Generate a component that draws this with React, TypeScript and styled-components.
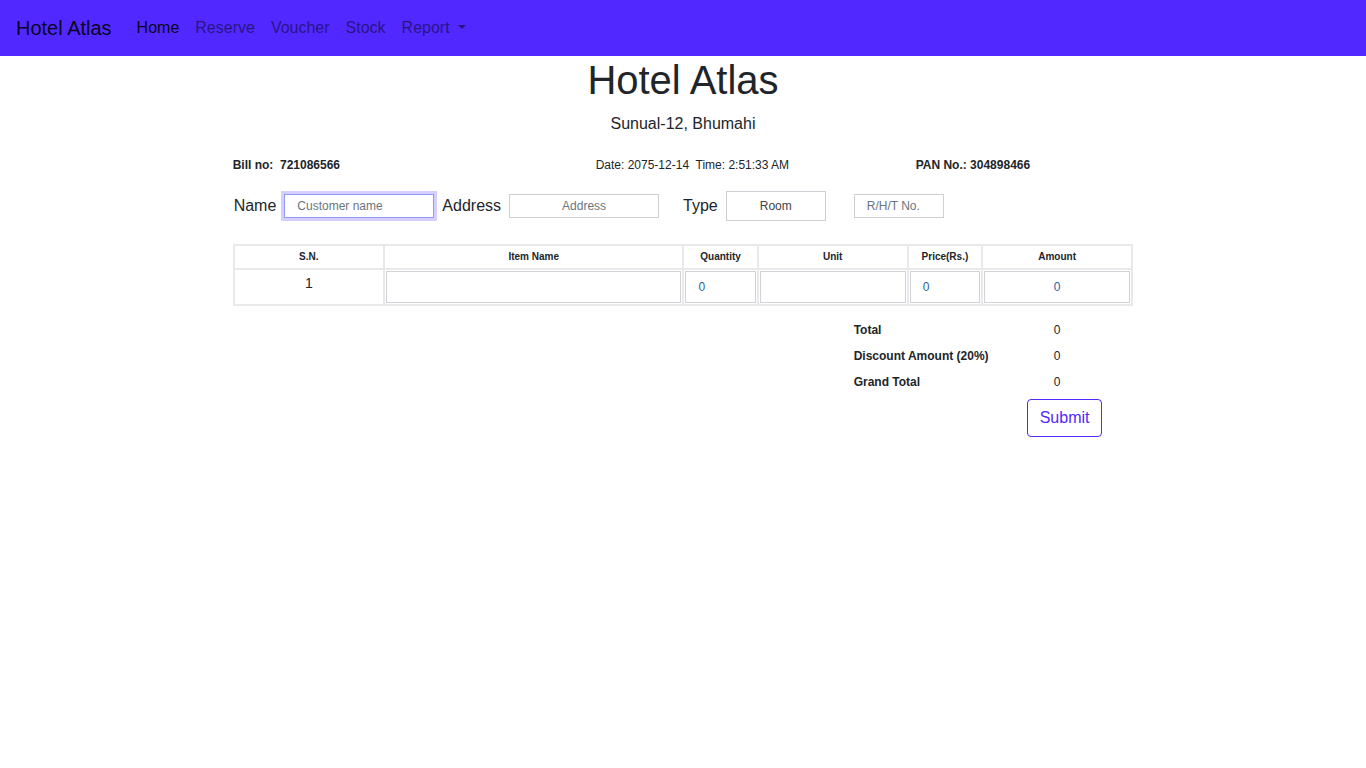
import React from "react";
import styled, { createGlobalStyle } from "styled-components";

const Global = createGlobalStyle`
  html { overflow-x: scroll; }
  html, body { margin: 0; padding: 0; background: #fff; }
  body {
    font-family: "Liberation Sans", Arial, Helvetica, sans-serif;
    font-size: 16px;
    line-height: 1.5;
    color: #212529;
  }
  * { box-sizing: border-box; }
`;

const BRAND = "#5128ff";

const Navbar = styled.nav`
  height: 56px;
  background: ${BRAND};
  display: flex;
  align-items: center;
  padding: 8px 16px;
`;

const Brand = styled.a`
  font-size: 20px;
  line-height: 30px;
  color: rgba(0, 0, 0, 0.9);
  margin-right: 17px;
  text-decoration: none;
`;

const NavList = styled.div`
  display: flex;
  align-items: center;
`;

const NavLink = styled.a<{ $active?: boolean; $caret?: boolean }>`
  font-size: 16px;
  line-height: 24px;
  padding: 8px;
  text-decoration: none;
  color: ${(p) => (p.$active ? "rgba(0,0,0,0.9)" : "rgba(0,0,0,0.5)")};
  ${(p) =>
    p.$caret &&
    `
    &::after {
      content: "";
      display: inline-block;
      margin-left: 8px;
      vertical-align: 0.255em;
      border-top: 0.3em solid;
      border-right: 0.3em solid transparent;
      border-left: 0.3em solid transparent;
      border-bottom: 0;
    }
  `}
`;

const Row = styled.div`
  display: flex;
  width: calc(100% + 30px);
  margin: 0 -15px;
`;

const Col = styled.div`
  flex: 0 0 66.6667%;
  max-width: 66.6667%;
  margin-left: 16.6667%;
  padding: 0 15px;
`;

const Title = styled.h1`
  margin: 0 0 8px;
  font-size: 40px;
  line-height: 48px;
  font-weight: 400;
  text-align: center;
`;

const Subtitle = styled.p`
  margin: 0 0 16px;
  text-align: center;
  font-size: 16px;
  line-height: 24px;
`;

const InfoRow = styled.div`
  display: grid;
  grid-template-columns: 363px 320px auto;
  font-size: 12px;
  line-height: 18px;
  margin-top: 20px;
`;

const Info = styled.div<{ $bold?: boolean }>`
  font-weight: ${(p) => (p.$bold ? 700 : 400)};
  white-space: pre;
`;

const FormRow = styled.div`
  display: flex;
  align-items: center;
  margin-top: 17px;
  height: 30px;
  padding-left: 1px;
`;

const Label = styled.label<{ $gapBefore?: number }>`
  font-size: 16px;
  line-height: 24px;
  margin-left: ${(p) => p.$gapBefore ?? 0}px;
  margin-right: 8px;
`;

const TextInput = styled.input<{
  $w: number;
  $focused?: boolean;
  $center?: boolean;
  $gapBefore?: number;
}>`
  width: ${(p) => p.$w}px;
  height: 24px;
  margin-left: ${(p) => p.$gapBefore ?? 0}px;
  font-family: inherit;
  font-size: 12px;
  padding: 0 12px;
  text-align: ${(p) => (p.$center ? "center" : "left")};
  border: 1px solid ${(p) => (p.$focused ? "#8f9cff" : "#cdd1d6")};
  box-shadow: ${(p) => (p.$focused ? "0 0 0 3px #d6ceff" : "none")};
  outline: none;
  background: #fff;
  &::placeholder { color: #6c757d; }
`;

const Select = styled.select<{ $gapBefore?: number }>`
  appearance: none;
  -webkit-appearance: none;
  width: 100px;
  height: 30px;
  margin-left: ${(p) => p.$gapBefore ?? 0}px;
  font-family: inherit;
  font-size: 12px;
  color: #444;
  background: #fff;
  border: 1px solid #cdd1d6;
  text-align: center;
  text-align-last: center;
  outline: none;
`;

const Table = styled.table`
  width: 100%;
  margin-top: 23px;
  border-collapse: separate;
  border-spacing: 2px;
  background: #e9e9e9;
`;

const Th = styled.th<{ $w: number }>`
  width: ${(p) => p.$w}px;
  height: 22px;
  padding: 0;
  background: #fff;
  font-size: 10px;
  font-weight: 700;
  line-height: 22px;
  text-align: center;
`;

const Td = styled.td`
  background: #fff;
  padding: 1px;
  height: 34px;
  vertical-align: top;
`;

const SnCell = styled.td`
  background: #fff;
  padding: 3px 0 0;
  height: 34px;
  vertical-align: top;
  text-align: center;
  font-size: 14px;
  line-height: 20px;
`;

const CellInput = styled.input<{ $center?: boolean }>`
  display: block;
  width: 100%;
  height: 32px;
  border: 1px solid #cfd3d8;
  padding: 0 12px;
  font-family: inherit;
  font-size: 12px;
  color: #2d5fa3;
  text-align: ${(p) => (p.$center ? "center" : "left")};
  outline: none;
  background: #fff;
`;

const Totals = styled.div`
  display: grid;
  grid-template-columns: 200px auto;
  grid-auto-rows: 26px;
  align-items: center;
  margin: 11px 0 0 621px;
  font-size: 12px;
`;

const TotalLabel = styled.div`
  font-weight: 700;
`;

const TotalValue = styled.div``;

const ButtonRow = styled.div`
  margin-top: 4px;
  padding-left: 794px;
`;

const SubmitButton = styled.button`
  font-family: inherit;
  font-size: 16px;
  line-height: 24px;
  padding: 6px 12px;
  border: 1px solid ${BRAND};
  border-radius: 4px;
  color: ${BRAND};
  background: #fff;
  cursor: pointer;
`;

const columns = [
  { name: "S.N.", w: 148 },
  { name: "Item Name", w: 297 },
  { name: "Quantity", w: 72 },
  { name: "Unit", w: 148 },
  { name: "Price(Rs.)", w: 72 },
  { name: "Amount", w: 148 },
];

export default function App() {
  return (
    <>
      <Global />
      <Navbar>
        <Brand href="#">Hotel Atlas</Brand>
        <NavList>
          <NavLink $active href="#">Home</NavLink>
          <NavLink href="#">Reserve</NavLink>
          <NavLink href="#">Voucher</NavLink>
          <NavLink href="#">Stock</NavLink>
          <NavLink $caret href="#">Report</NavLink>
        </NavList>
      </Navbar>
      <Row>
        <Col>
          <Title>Hotel Atlas</Title>
          <Subtitle>Sunual-12, Bhumahi</Subtitle>
          <InfoRow>
            <Info $bold>{"Bill no:  721086566"}</Info>
            <Info>{"Date: 2075-12-14  Time: 2:51:33 AM"}</Info>
            <Info $bold>{"PAN No.: 304898466"}</Info>
          </InfoRow>
          <FormRow>
            <Label>Name</Label>
            <TextInput $w={150} $focused placeholder="Customer name" />
            <Label $gapBefore={8}>Address</Label>
            <TextInput $w={150} $center placeholder="Address" />
            <Label $gapBefore={24}>Type</Label>
            <Select defaultValue="Room">
              <option>Room</option>
              <option>Hall</option>
              <option>Table</option>
            </Select>
            <TextInput $w={90} $gapBefore={28} placeholder="R/H/T No." />
          </FormRow>
          <Table>
            <thead>
              <tr>
                {columns.map((c) => (
                  <Th key={c.name} $w={c.w}>{c.name}</Th>
                ))}
              </tr>
            </thead>
            <tbody>
              <tr>
                <SnCell>1</SnCell>
                <Td><CellInput /></Td>
                <Td><CellInput defaultValue="0" /></Td>
                <Td><CellInput /></Td>
                <Td><CellInput defaultValue="0" /></Td>
                <Td><CellInput $center defaultValue="0" /></Td>
              </tr>
            </tbody>
          </Table>
          <Totals>
            <TotalLabel>Total</TotalLabel>
            <TotalValue>0</TotalValue>
            <TotalLabel>Discount Amount (20%)</TotalLabel>
            <TotalValue>0</TotalValue>
            <TotalLabel>Grand Total</TotalLabel>
            <TotalValue>0</TotalValue>
          </Totals>
          <ButtonRow>
            <SubmitButton>Submit</SubmitButton>
          </ButtonRow>
        </Col>
      </Row>
    </>
  );
}
